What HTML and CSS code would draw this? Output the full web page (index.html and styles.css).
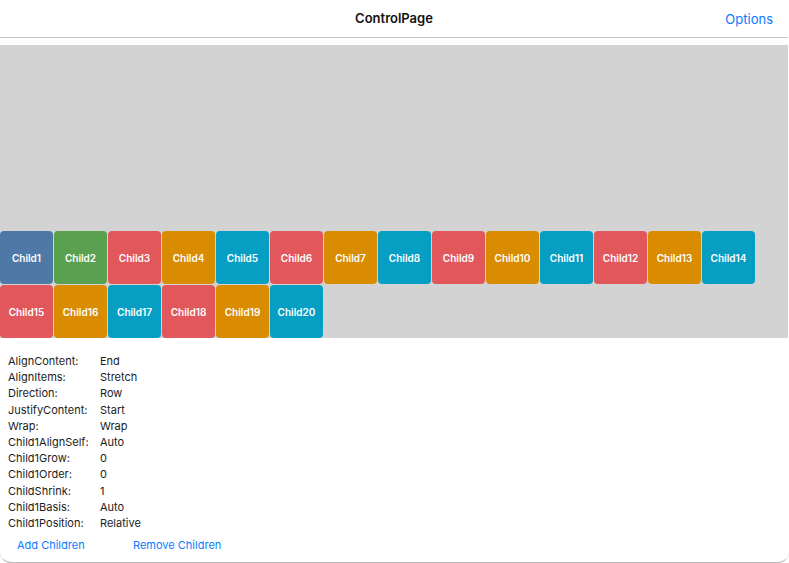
FILE: index.html
```html
<!DOCTYPE html>
<html>
<head>
<meta charset="utf-8">
<link rel="stylesheet" href="styles.css">
</head>
<body>
<div class="window">
  <header class="nav">
    <div class="title">ControlPage</div>
    <div class="options">Options</div>
  </header>
  <div class="spacer"></div>
  <section class="flexbox">
    <div class="child c-blue">Child1</div>
    <div class="child c-green">Child2</div>
    <div class="child c-red">Child3</div>
    <div class="child c-orange">Child4</div>
    <div class="child c-teal">Child5</div>
    <div class="child c-red">Child6</div>
    <div class="child c-orange">Child7</div>
    <div class="child c-teal">Child8</div>
    <div class="child c-red">Child9</div>
    <div class="child c-orange">Child10</div>
    <div class="child c-teal">Child11</div>
    <div class="child c-red">Child12</div>
    <div class="child c-orange">Child13</div>
    <div class="child c-teal">Child14</div>
    <div class="child c-red">Child15</div>
    <div class="child c-orange">Child16</div>
    <div class="child c-teal">Child17</div>
    <div class="child c-red">Child18</div>
    <div class="child c-orange">Child19</div>
    <div class="child c-teal">Child20</div>
  </section>
  <section class="props">
    <div class="row"><span class="k">AlignContent:</span><span class="v">End</span></div>
    <div class="row"><span class="k">AlignItems:</span><span class="v">Stretch</span></div>
    <div class="row"><span class="k">Direction:</span><span class="v">Row</span></div>
    <div class="row"><span class="k">JustifyContent:</span><span class="v">Start</span></div>
    <div class="row"><span class="k">Wrap:</span><span class="v">Wrap</span></div>
    <div class="row"><span class="k">Child1AlignSelf:</span><span class="v">Auto</span></div>
    <div class="row"><span class="k">Child1Grow:</span><span class="v">0</span></div>
    <div class="row"><span class="k">Child1Order:</span><span class="v">0</span></div>
    <div class="row"><span class="k">ChildShrink:</span><span class="v">1</span></div>
    <div class="row"><span class="k">Child1Basis:</span><span class="v">Auto</span></div>
    <div class="row"><span class="k">Child1Position:</span><span class="v">Relative</span></div>
  </section>
  <div class="actions">
    <span class="btn add">Add Children</span>
    <span class="btn">Remove Children</span>
  </div>
</div>
</body>
</html>
```
FILE: styles.css
```css
* { box-sizing: border-box; }
html, body { margin: 0; padding: 0; background: #fff; }
body {
  width: 789px;
  height: 563px;
  overflow: hidden;
  font-family: Inter, "Liberation Sans", sans-serif;
  color: #1c1c1c;
}
.window {
  width: 789px;
  height: 563px;
  border-bottom: 1px solid #b8b8b8;
  border-radius: 0 0 11px 11px;
  display: flex;
  flex-direction: column;
}
.nav {
  height: 38px;
  border-bottom: 1px solid #c6c6c6;
  margin-right: 1px;
  display: flex;
  align-items: center;
  justify-content: center;
  position: relative;
  padding-bottom: 1px;
}
.title {
  font-size: 13px;
  font-weight: 600;
  color: #111;
}
.options {
  position: absolute;
  right: 15px;
  top: 11px;
  font-size: 13px;
  color: #0a7aff;
}
.spacer { height: 7px; }
.flexbox {
  height: 293px;
  background: #d3d3d3;
  margin-right: 1px;
  display: flex;
  flex-wrap: wrap;
  align-content: flex-end;
  gap: 1px;
}
.child {
  width: 53px;
  height: 53px;
  border-radius: 4px;
  color: #fff;
  font-size: 10px;
  font-weight: 600;
  display: flex;
  align-items: center;
  justify-content: center;
}
.c-blue { background: #4e79a7; }
.c-green { background: #59a14f; }
.c-red { background: #e1575c; }
.c-orange { background: #d98c00; }
.c-teal { background: #069fc3; }
.props {
  padding: 15px 0 0 8px;
  font-size: 11px;
}
.row {
  display: flex;
  height: 16.2px;
  align-items: center;
}
.k { width: 92px; }
.actions {
  display: flex;
  padding: 7px 0 0 17px;
  font-size: 11px;
  color: #0a7aff;
}
.btn.add { width: 116px; }
```
